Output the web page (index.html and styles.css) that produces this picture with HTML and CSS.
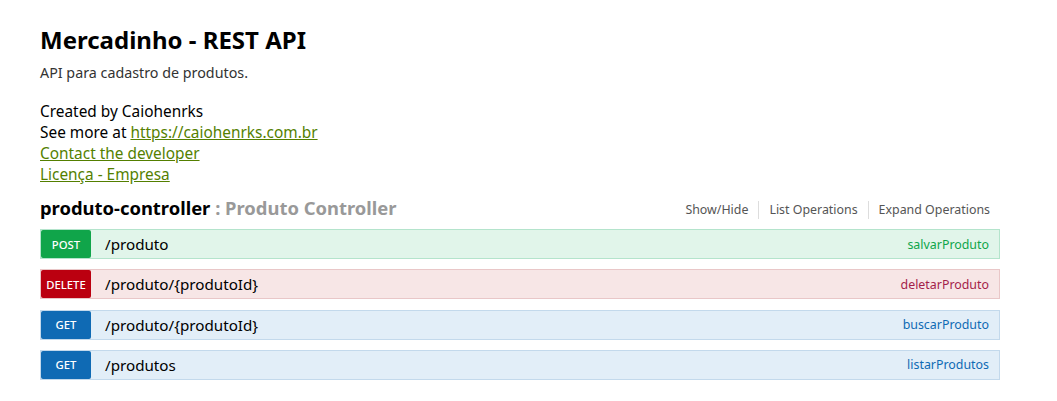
FILE: index.html
```html
<!DOCTYPE html>
<html lang="pt">
<head>
<meta charset="utf-8">
<title>Mercadinho - REST API</title>
<link rel="stylesheet" href="styles.css">
</head>
<body>
<div class="wrap">
  <div class="info">
    <h1 class="info-title">Mercadinho - REST API</h1>
    <p class="info-desc">API para cadastro de produtos.</p>
    <div class="info-meta">
      <div>Created by Caiohenrks</div>
      <div>See more at <a href="#">https://caiohenrks.com.br</a></div>
      <div><a href="#">Contact the developer</a></div>
      <div><a href="#">Licença - Empresa</a></div>
    </div>
  </div>
  <div class="resource">
    <div class="resource-heading">
      <h2><span class="res-name">produto-controller</span><span class="res-desc"> : Produto Controller</span></h2>
      <ul class="options">
        <li>Show/Hide</li>
        <li>List Operations</li>
        <li>Expand Operations</li>
      </ul>
    </div>
    <ul class="ops">
      <li class="op post"><span class="method">POST</span><span class="path">/produto</span><span class="nick">salvarProduto</span></li>
      <li class="op delete"><span class="method">DELETE</span><span class="path">/produto/{produtoId}</span><span class="nick">deletarProduto</span></li>
      <li class="op get"><span class="method">GET</span><span class="path">/produto/{produtoId}</span><span class="nick">buscarProduto</span></li>
      <li class="op get"><span class="method">GET</span><span class="path">/produtos</span><span class="nick">listarProdutos</span></li>
    </ul>
  </div>
</div>
</body>
</html>
```

FILE: styles.css
```css
html, body {
  margin: 0;
  padding: 0;
  background: #fff;
}
body {
  font-family: "Noto Sans", "Open Sans", sans-serif;
  color: #000;
}
.wrap {
  width: 960px;
  margin: 0 0 0 40px;
  padding-top: 27px;
}
.info-title {
  margin: 0;
  font-size: 24px;
  line-height: 25px;
  font-weight: bold;
}
.info-desc {
  margin: 14px 0 0;
  font-size: 14.3px;
  line-height: 14px;
  color: #333;
}
.info-meta {
  margin-top: 20px;
  font-size: 15.4px;
  line-height: 21px;
}
.info-meta > div:first-child {
  padding-top: 1px;
}
.info-meta a {
  color: #547f00;
  text-decoration: underline;
}
.resource {
  margin-top: 11px;
}
.resource-heading {
  display: flex;
  align-items: center;
  justify-content: space-between;
  height: 24px;
  margin-bottom: 9px;
}
.resource-heading h2 {
  margin: 0;
  font-size: 18.4px;
  line-height: 24px;
  font-weight: bold;
}
.res-name { color: #000; }
.res-desc { color: #999; }
.options {
  list-style: none;
  margin: 4px 10px 0 0;
  padding: 0;
  display: flex;
  font-size: 12.4px;
  color: #555;
}
.options li {
  padding: 2px 10px;
  border-right: 1px solid #ddd;
  line-height: 14px;
}
.options li:last-child {
  border-right: none;
  padding-right: 0;
}
.ops {
  list-style: none;
  margin: 0;
  padding: 0;
}
.op {
  display: flex;
  align-items: center;
  height: 28px;
  border: 1px solid;
  margin-bottom: 10.33px;
}
.method {
  width: 50px;
  height: 28px;
  display: flex;
  align-items: center;
  justify-content: center;
  color: #fff;
  font-size: 11.3px;
  font-weight: 500;
  border-radius: 2px;
}
.path {
  flex: 1;
  padding-left: 14px;
  font-size: 15.2px;
  color: #000;
}
.nick {
  font-size: 12.4px;
  padding-right: 10px;
}
.post { background: #e1f5ea; border-color: #b4e4cc; }
.post .method { background: #10a54a; }
.post .nick { color: #10a54a; }
.delete { background: #f7e6e6; border-color: #e9c7c8; }
.delete .method { background: #bb0010; }
.delete .nick { color: #a41e4a; }
.get { background: #e2eef8; border-color: #c3d9ec; }
.get .method { background: #0f6ab4; }
.get .nick { color: #0f6ab4; }
```
